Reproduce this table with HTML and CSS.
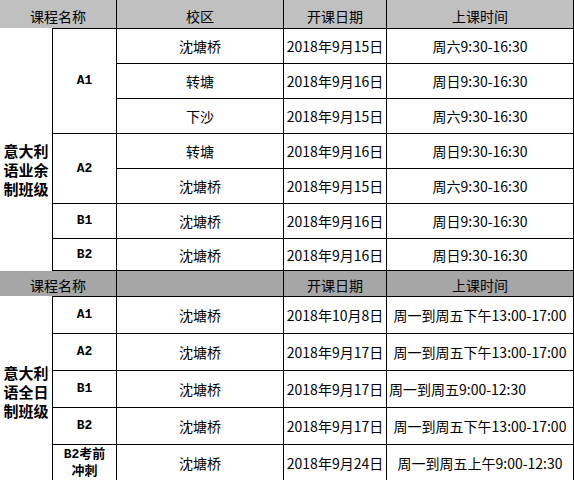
FILE: index.html
```html
<!DOCTYPE html>
<html lang="zh">
<head>
<meta charset="utf-8">
<title>课程安排</title>
<link rel="stylesheet" href="styles.css">
</head>
<body>
<div class="sheet">
  <div class="hd span2">课程名称</div>
  <div class="hd">校区</div>
  <div class="hd">开课日期</div>
  <div class="hd">上课时间</div>

  <div class="group group-part">意大利语业余制班级</div>
  <div class="lvl top rows3">A1</div>
  <div class="cell top">沈塘桥</div>
  <div class="cell top">2018年9月15日</div>
  <div class="cell top">周六9:30-16:30</div>
  <div class="cell">转塘</div>
  <div class="cell">2018年9月16日</div>
  <div class="cell">周日9:30-16:30</div>
  <div class="cell">下沙</div>
  <div class="cell">2018年9月15日</div>
  <div class="cell">周六9:30-16:30</div>
  <div class="lvl rows2">A2</div>
  <div class="cell">转塘</div>
  <div class="cell">2018年9月16日</div>
  <div class="cell">周日9:30-16:30</div>
  <div class="cell">沈塘桥</div>
  <div class="cell">2018年9月15日</div>
  <div class="cell">周六9:30-16:30</div>
  <div class="lvl">B1</div>
  <div class="cell">沈塘桥</div>
  <div class="cell">2018年9月16日</div>
  <div class="cell">周日9:30-16:30</div>
  <div class="lvl">B2</div>
  <div class="cell">沈塘桥</div>
  <div class="cell">2018年9月16日</div>
  <div class="cell">周日9:30-16:30</div>

  <div class="hd hd-dark span2">课程名称</div>
  <div class="hd hd-dark"></div>
  <div class="hd hd-dark">开课日期</div>
  <div class="hd hd-dark">上课时间</div>

  <div class="group group-full">意大利语全日制班级</div>
  <div class="lvl top">A1</div>
  <div class="cell top">沈塘桥</div>
  <div class="cell top">2018年10月8日</div>
  <div class="cell top">周一到周五下午13:00-17:00</div>
  <div class="lvl">A2</div>
  <div class="cell">沈塘桥</div>
  <div class="cell">2018年9月17日</div>
  <div class="cell">周一到周五下午13:00-17:00</div>
  <div class="lvl">B1</div>
  <div class="cell">沈塘桥</div>
  <div class="cell">2018年9月17日</div>
  <div class="cell cell-left">周一到周五9:00-12:30</div>
  <div class="lvl">B2</div>
  <div class="cell">沈塘桥</div>
  <div class="cell">2018年9月17日</div>
  <div class="cell">周一到周五下午13:00-17:00</div>
  <div class="lvl lvl-two">B2考前<br>冲刺</div>
  <div class="cell">沈塘桥</div>
  <div class="cell">2018年9月24日</div>
  <div class="cell">周一到周五上午9:00-12:30</div>
</div>
</body>
</html>
```

FILE: styles.css
```css
html, body {
  margin: 0;
  padding: 0;
  background: #ffffff;
}

.sheet {
  display: grid;
  grid-template-columns: 52px 65px 167px 103px 187px;
  grid-template-rows: 28px 36px 35px 35px 35px 35px 35px 32px 25px 38px 37px 37px 37px 37px;
  font-family: "Noto Sans CJK SC", sans-serif;
  font-size: 14px;
  line-height: 16px;
  color: #000000;
}

.sheet > div {
  box-sizing: border-box;
  display: flex;
  align-items: center;
  justify-content: center;
  text-align: center;
  white-space: nowrap;
}

.hd {
  background: #c0c0c0;
  border-right: 1px solid #000000;
  padding-top: 3px;
}

.hd-dark {
  background: #a6a6a6;
  padding-top: 2px;
}

.span2 {
  grid-column: span 2;
}

.cell {
  border-right: 1px solid #000000;
  border-bottom: 1px solid #000000;
}

.top {
  border-top: 1px solid #000000;
}

.cell-left {
  justify-content: flex-start !important;
  padding-left: 2px;
}

.lvl {
  border-left: 1px solid #000000;
  border-right: 1px solid #000000;
  border-bottom: 1px solid #000000;
  font-family: "Liberation Mono", "Noto Sans CJK SC", monospace;
  font-weight: 700;
  font-size: 13px;
}

.lvl-two {
  line-height: 17px;
  font-size: 13px;
}

.rows3 {
  grid-row: span 3;
}

.rows2 {
  grid-row: span 2;
}

.sheet > .group {
  white-space: normal;
  font-weight: 700;
  font-size: 15px;
  line-height: 19px;
  padding: 0 3px;
}

.group-part {
  grid-row: span 7;
  padding-top: 40px !important;
}

.group-full {
  grid-row: span 5;
  padding-top: 4px !important;
}
```
